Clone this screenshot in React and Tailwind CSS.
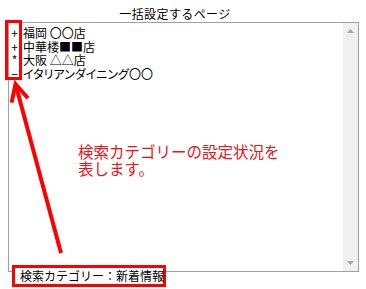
import React from "react";

const jp = "font-['MS_UI_Gothic','Noto_Sans_CJK_JP',sans-serif]";

const rows = [
  ["+", "福岡 〇〇店"],
  ["+", "中華楼■■店"],
  ["*", "大阪 △△店"],
  ["−", "イタリアンダイニング〇〇"],
];

export default function App() {
  return (
    <div className={`relative w-[366px] h-[289px] bg-white text-black ${jp}`}>
      <div className="pl-[8px] pt-[5px]">
        <div className="w-[334px] text-center text-[12px] leading-[17px] tracking-[0.4px]">一括設定するページ</div>
        <div className="flex w-[351px] h-[250px] border border-[#a0a0a0] bg-white">
          <div className="flex-1 pt-[3px] text-[12px] leading-[13.5px] [font-feature-settings:'palt']">
            {rows.map(([s, t]) => (
              <div key={t} className="flex">
                <span className="w-[11px] mr-[3px] text-center">{s}</span>
                <span>{t}</span>
              </div>
            ))}
          </div>
          <div className="w-[16px] flex flex-col justify-between items-center bg-[#f0f0f0] border-l border-white py-[6px]">
            <svg width="7" height="4" viewBox="0 0 7 4"><path d="M3.5 0 L7 4 L0 4 Z" fill="#a3a3a3" /></svg>
            <svg width="7" height="4" viewBox="0 0 7 4"><path d="M0 0 L7 0 L3.5 4 Z" fill="#a3a3a3" /></svg>
          </div>
        </div>
      </div>

      {/* annotations */}
      <div className="absolute left-[5px] top-[20px] w-[17px] h-[60px] border-[3px] border-[#ff0000]" />
      <div className="absolute left-[12px] top-[265px] w-[154px] h-[22px] border-[3px] border-[#ff0000] bg-white flex items-center pl-[5px] text-[12px] leading-[14px] whitespace-nowrap">
        検索カテゴリー：新着情報
      </div>
      <svg className="absolute left-0 top-0" width="366" height="289" viewBox="0 0 366 289">
        <g stroke="#ff0000" strokeWidth="4" strokeLinecap="butt" fill="none">
          <line x1="61" y1="253" x2="16" y2="86" />
          <polyline points="11.6,102.7 15.5,84 27.9,98.3" strokeLinejoin="miter" />
        </g>
      </svg>
      <div className="absolute left-[78px] top-[143px] text-[15.5px] leading-[17px] text-[#e8141c] font-['Noto_Sans_CJK_JP',sans-serif] whitespace-nowrap">
        検索カテゴリーの設定状況を<br />表します。
      </div>
    </div>
  );
}
